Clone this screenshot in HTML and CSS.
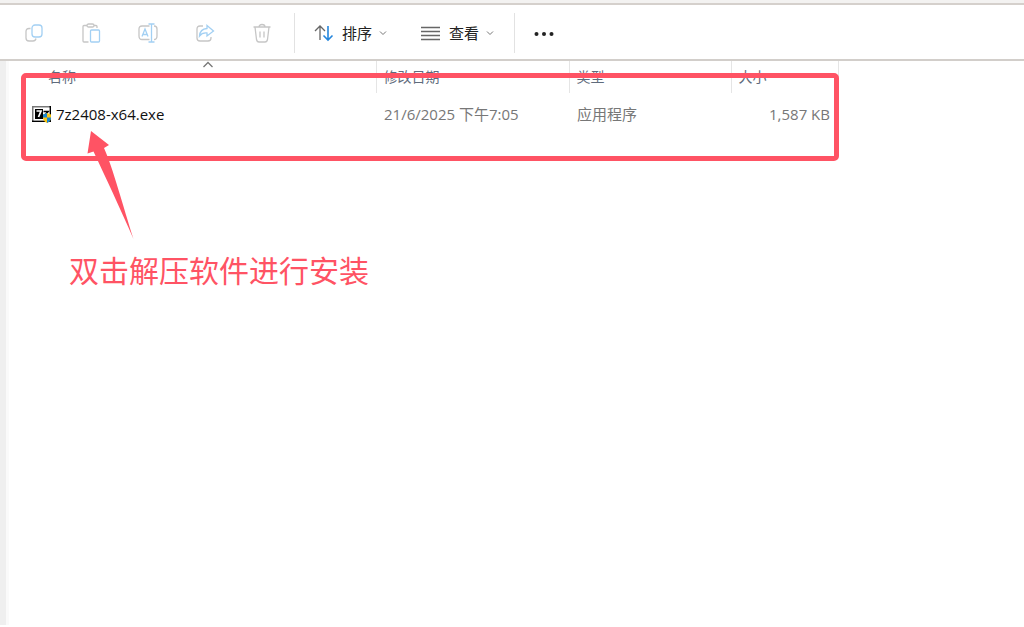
FILE: index.html
```
<!DOCTYPE html>
<html lang="zh-CN">
<head>
<meta charset="utf-8">
<title>文件列表</title>
<link rel="stylesheet" href="styles.css">
</head>
<body>
<div class="strip"></div>
<header class="toolbar">
  <div class="actions">
    <button class="tool" aria-label="复制" disabled>
      <svg width="20" height="20" viewBox="0 0 20 20"><path class="grey" d="M6.500 5.500H5Q2 5.500 2 8.500V15Q2 18 5 18H9Q11.500 18 12 15.500"/><rect class="blue" x="8" y="2" width="10" height="12" rx="3"/></svg>
    </button>
    <button class="tool" aria-label="粘贴" disabled>
      <svg width="20" height="20" viewBox="0 0 20 20"><path class="grey" d="M6 2.500H3Q2 2.500 2 3.500V18Q2 19 3 19H7.500M13 2.500H15Q16 2.500 16 3.500V5"/><rect class="grey" x="6" y="1" width="7" height="3" rx="1.500"/><rect class="blue" x="9.500" y="7" width="9" height="12" rx="1"/></svg>
    </button>
    <button class="tool" aria-label="重命名" disabled>
      <svg width="20" height="20" viewBox="0 0 20 20"><path class="grey" d="M11.500 3H4Q1 3 1 6V13Q1 16.500 4 16.500H11.500M16 3Q19 3 19 6V13Q19 16.500 16 16.500"/><path class="blue" d="M4 13.500 7 6 10 13.500M5 11.500H9M13.500 1.500V18.500M10.500 1H16.500M10.500 19H16.500"/></svg>
    </button>
    <button class="tool" aria-label="共享" disabled>
      <svg width="20" height="20" viewBox="0 0 20 20"><path class="grey" d="M8 3H5Q2 3 2 6V15Q2 18 5 18H13Q16 18 16 15V14"/><path class="blue" d="M12 2.500 18.500 8 12 13V10Q7 9.500 4.500 13Q5 6 12 5.500Z"/></svg>
    </button>
    <button class="tool" aria-label="删除" disabled>
      <svg width="20" height="20" viewBox="0 0 20 20"><path class="grey" d="M1.500 4H18.500M7 4Q7 1.500 10 1.500Q13 1.500 13 4M3 4 4.500 16.500Q5 19 7 19H13Q15 19 15.500 16.500L17 4M8 8.500V14.500M12 8.500V14.500"/></svg>
    </button>
  </div>
  <div class="menus">
    <button class="menu">
      <svg width="20" height="20" viewBox="0 0 20 20"><path class="dark" d="M6 17V3M1 8 6 3 11 8"/><path class="vivid" d="M14 3V17M9.500 12.500 14 17 18.500 12.500"/></svg>
      <span>排序</span>
      <svg class="chevron" width="8" height="8" viewBox="0 0 8 8"><path d="M1 2.500 4 5.500 7 2.500"/></svg>
    </button>
    <button class="menu">
      <svg width="20" height="20" viewBox="0 0 20 20"><path class="dark" d="M0 4.500H19M0 8.500H19M0 12.500H19M0 16.500H19"/></svg>
      <span>查看</span>
      <svg class="chevron" width="8" height="8" viewBox="0 0 8 8"><path d="M1 2.500 4 5.500 7 2.500"/></svg>
    </button>
  </div>
  <button class="tool" aria-label="更多">
    <svg width="20" height="20" viewBox="0 0 20 20"><g fill="#222"><circle cx="2.500" cy="11" r="2"/><circle cx="10" cy="11" r="2"/><circle cx="17.500" cy="11" r="2"/></g></svg>
  </button>
</header>
<main class="content">
  <aside class="edge"></aside>
  <section class="files">
    <table class="list">
      <colgroup><col class="c-name"><col class="c-date"><col class="c-type"><col class="c-size"></colgroup>
      <thead>
        <tr><th class="name">名称<svg class="sort" width="12" height="8" viewBox="0 0 12 8"><path d="M1.500 6 6 1.500 10.500 6"/></svg></th><th>修改日期</th><th>类型</th><th>大小</th></tr>
      </thead>
      <tbody>
        <tr>
          <td class="file"><div class="entry">
            <svg width="20" height="18" viewBox="0 0 20 18"><rect y="1" width="19" height="16" fill="#777"/><path d="M19 1V17H0V15.500H17.500V1Z" fill="#000"/><rect x="1.500" y="2.500" width="16" height="13" fill="#fff"/><rect x="3" y="4" width="8" height="10" fill="#000"/><path d="M4.500 6H9L6.500 12" fill="none" stroke="#fff" stroke-width="1.700"/><path d="M11.500 6.500H16L12 11" fill="none" stroke="#000" stroke-width="1.700"/><path d="M15 8 19 9.500V12.500Q19 16 15 18Q11 16 11 12.500V9.500Z" fill="#f9c512"/><path d="M15 8V12.500H11V9.500ZM15 12.500H19Q19 16 15 18Z" fill="#1685d1"/></svg>
            <span>7z2408-x64.exe</span></div>
          </td>
          <td>21/6/2025 下午7:05</td><td>应用程序</td><td class="size">1,587 KB</td>
        </tr>
      </tbody>
    </table>
  </section>
  <div class="highlight"></div>
  <svg class="arrow" width="50" height="110" viewBox="0 0 50 110"><path fill="#ff5364" d="M6 1 24 15 19 18C28 38 38 76 48.500 109C35 78 20 46 8.500 21.500L2.500 23.500Z"/></svg>
  <p class="note">双击解压软件进行安装</p>
</main>
</body>
</html>
```
FILE: styles.css
```
* { box-sizing: border-box; }
body {
  margin: 0;
  min-height: 100vh;
  display: flex;
  flex-direction: column;
  background: #fff;
  color: #222;
  font-family: "Open Sans", "Noto Sans CJK SC", sans-serif;
  font-size: 15px;
  line-height: 20px;
}
.strip {
  height: 5px;
  background: #f3f2f1;
  border-bottom: 2px solid #d5d0cc;
}
.toolbar {
  display: flex;
  align-items: center;
  height: 56px;
  padding: 2px 0 0 24px;
  border-bottom: 2px solid #d2ceca;
}
button {
  display: flex;
  align-items: center;
  padding: 0;
  border: 0;
  background: none;
  color: inherit;
  font: inherit;
}
svg { display: block; flex: none; }
.toolbar path, .toolbar rect, .sort path { fill: none; stroke-width: 1.3; }
.toolbar .grey { stroke: #c6c6c6; }
.toolbar .blue { stroke: #a3d0f3; }
.toolbar .dark { stroke: #666; }
.toolbar .vivid { stroke: #2586dc; stroke-width: 1.6; }
.toolbar .chevron path { stroke: #777; stroke-width: 1; }
.actions {
  display: flex;
  align-items: center;
  gap: 37px;
  height: 40px;
  padding-right: 22px;
  border-right: 1px solid #e2e2e2;
}
.menus {
  display: flex;
  align-items: center;
  gap: 34px;
  height: 40px;
  margin-right: 19px;
  padding: 0 20px 0 19px;
  border-right: 1px solid #e2e2e2;
}
.menu { gap: 8px; }
.menu .chevron { margin-left: -1px; }
.content {
  position: relative;
  flex: 1;
  display: flex;
  padding-bottom: 2px;
}
.edge {
  width: 9px;
  background: #efefef;
  border-right: 3px solid #fafafa;
}
.files { flex: 1; }
.list {
  width: 829px;
  table-layout: fixed;
  border-collapse: collapse;
}
.c-name { width: 367px; }
.c-date { width: 193px; }
.c-type { width: 162px; }
.c-size { width: 107px; }
th {
  position: relative;
  height: 32px;
  padding: 0 7px;
  border-right: 1px solid #e5e5e5;
  color: #5f6b7c;
  font-size: 14px;
  font-weight: 400;
  text-align: left;
}
th.name { padding-left: 39px; }
.sort { position: absolute; top: 0; right: 162px; }
.sort path { stroke: #777; }
td {
  height: 42px;
  padding: 0 8px;
  color: #777;
}
td.file { padding-left: 23px; color: #111; }
td.size { text-align: right; }
.entry { display: flex; align-items: center; gap: 4px; }
.highlight {
  position: absolute;
  left: 21px;
  top: 12px;
  width: 818px;
  height: 88px;
  border: 5px solid #ff5364;
  border-radius: 5px;
}
.arrow { position: absolute; left: 85px; top: 69px; }
.note {
  position: absolute;
  left: 69px;
  top: 190px;
  margin: 0;
  color: #ff5364;
  font-size: 30px;
  line-height: 40px;
}
```
